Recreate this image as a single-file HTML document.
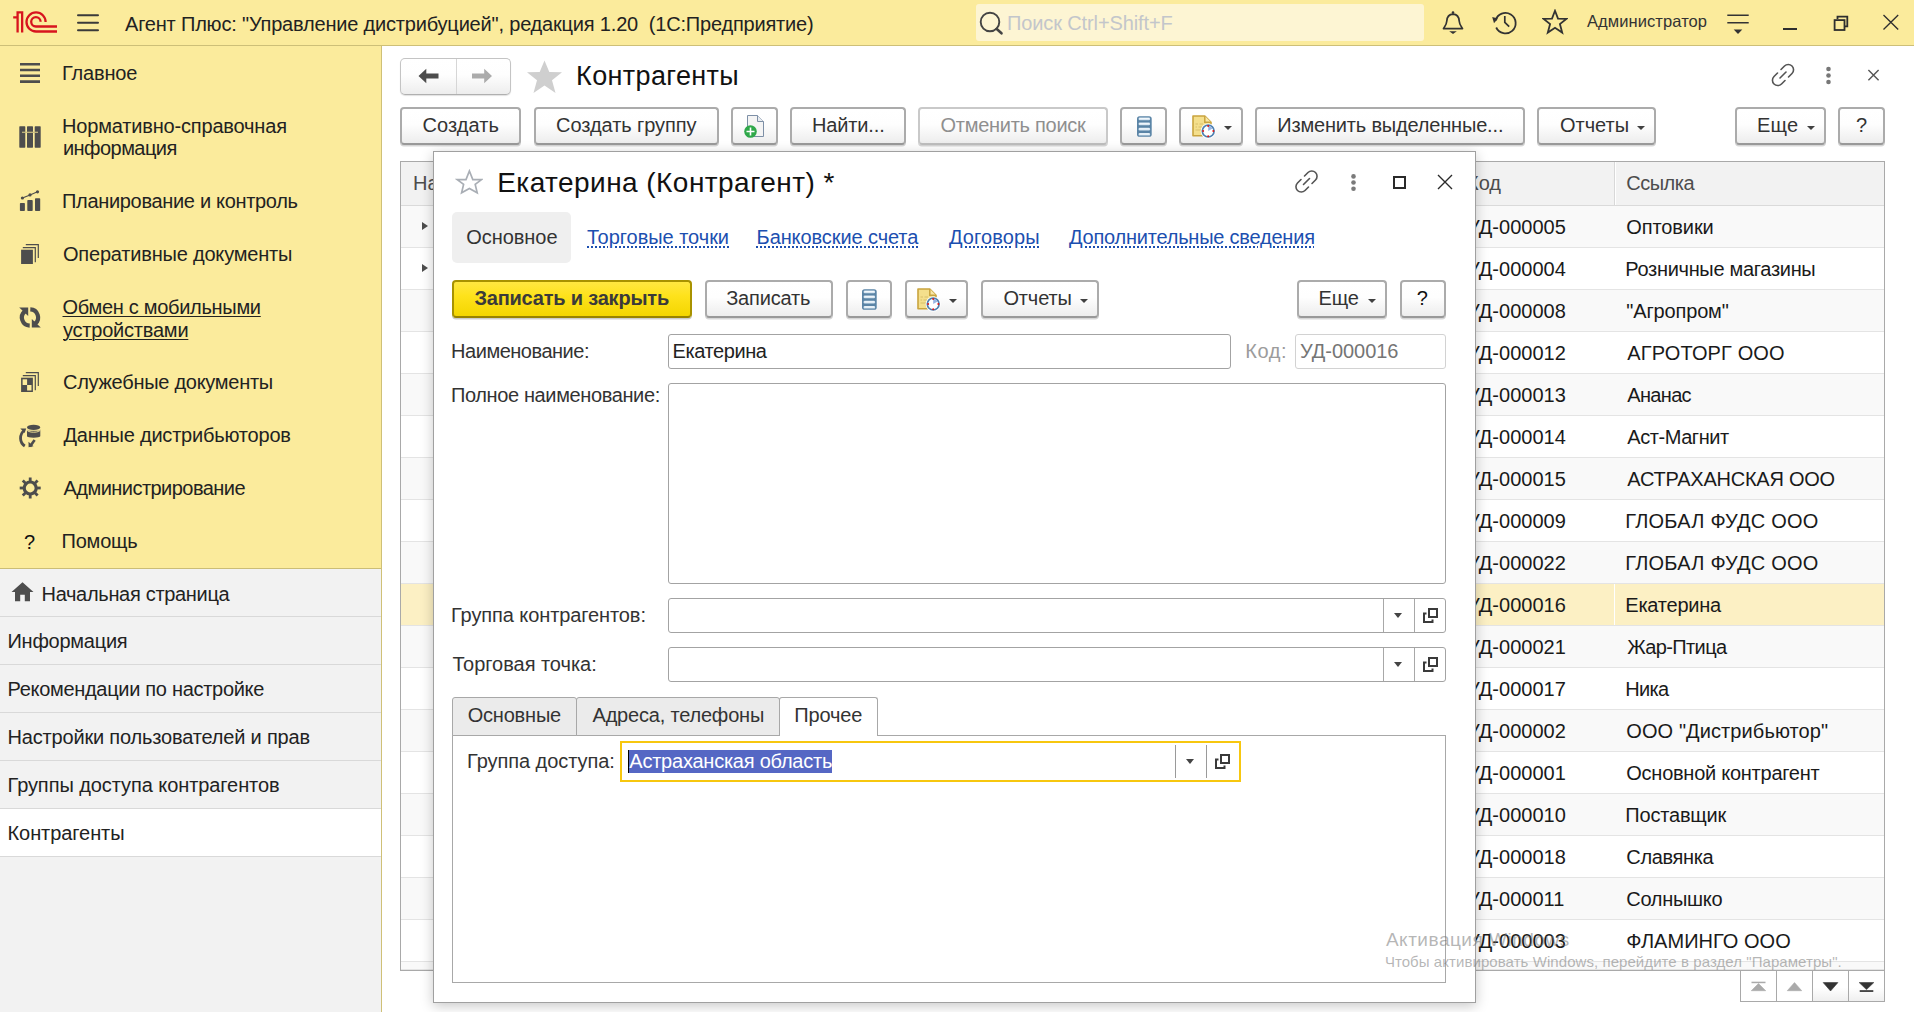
<!DOCTYPE html>
<html><head><meta charset="utf-8"><style>
*{box-sizing:border-box;margin:0;padding:0}
html,body{width:1914px;height:1012px;overflow:hidden;background:#fff}
body{font-family:"Liberation Sans",sans-serif;font-size:20px;color:#333;position:relative}
.a{position:absolute}
.t{position:absolute;white-space:nowrap;line-height:1}
.btn{position:absolute;border:2px solid #ababab;border-bottom-color:#999;border-radius:4px;background:linear-gradient(#ffffff 0%,#fefefe 45%,#ededed 100%);box-shadow:0 1.5px 0.5px rgba(0,0,0,0.16)}
.dd{position:absolute;width:0;height:0;border-left:4px solid transparent;border-right:4px solid transparent;border-top:4px solid #404040}
.inp{position:absolute;border:1px solid #a3a3a3;border-radius:3px;background:#fff}
.lnk{color:#1c4fb0;text-decoration:underline;text-decoration-style:dotted;text-underline-offset:4px;text-decoration-thickness:1px}
.sep{position:absolute;background:#a8a8a8;width:1px}
.tri{position:absolute;width:0;height:0;border-top:4.3px solid transparent;border-bottom:4.3px solid transparent;border-left:6px solid #4d4d4d}
</style></head><body>
<div class="a" style="left:0;top:0;width:1914px;height:45px;background:#fbeb9c"></div>
<div class="a" style="left:0;top:45px;width:1914px;height:1px;background:#cdbf78"></div>
<svg class="a" style="left:12px;top:10px" width="46" height="24" viewBox="0 0 46 24">
  <g fill="none" stroke="#d7141e" stroke-width="2.3">
    <path d="M1.2 7.4 H5.6 M5.6 22.6 V2.4 H10.15 V22.6"/>
    <path d="M33.6 11.95 A9.55 9.55 0 1 0 24.05 21.5 H45"/>
    <path d="M28.6 11.8 A4.7 4.7 0 1 0 23.9 16.5 H45"/>
  </g>
</svg>
<svg class="a" style="left:76px;top:13px" width="24" height="19" viewBox="0 0 24 19"><g stroke="#3a3a3a" stroke-width="2" stroke-linecap="round"><path d="M2 2.2H22M2 9.7H22M2 17.3H22"/></g></svg>
<div class="t" id="ttl" style="left:125.00px;top:14px;font-size:20px;color:#222;letter-spacing:-0.188px;">Агент Плюс: "Управление дистрибуцией", редакция 1.20&nbsp; (1С:Предприятие)</div>
<div class="a" style="left:976px;top:4px;width:448px;height:37px;background:#fdf5d3;border-radius:3px"></div>
<svg class="a" style="left:978px;top:10px" width="28" height="26" viewBox="0 0 28 26"><circle cx="12" cy="12" r="9.3" fill="none" stroke="#444" stroke-width="1.9"/><path d="M18.5 18.8 L23.5 23.3" stroke="#444" stroke-width="2.6" stroke-linecap="round"/></svg>
<div class="t" id="srch" style="left:1007.00px;top:13px;font-size:20px;color:#c3c6cb;letter-spacing:-0.118px;">Поиск Ctrl+Shift+F</div>
<svg class="a" style="left:1441px;top:10px" width="24" height="25" viewBox="0 0 24 25"><path d="M2.5 18.6 H21.5 C21 17.2 18.5 15.5 18.2 11 C18 7.5 17 4.5 12 4.2 C7 4.5 6 7.5 5.8 11 C5.5 15.5 3 17.2 2.5 18.6 Z" fill="none" stroke="#333" stroke-width="1.7" stroke-linejoin="round"/><circle cx="12" cy="2.6" r="1.3" fill="#333"/><path d="M8.2 21.2 H15.8 L12 24 Z" fill="#333"/></svg>
<svg class="a" style="left:1491px;top:10px" width="27" height="26" viewBox="0 0 27 26"><path d="M4.6 10.5 A10.2 10.2 0 1 1 5.2 17.5" fill="none" stroke="#333" stroke-width="1.8"/><path d="M1.2 7 L7 8.5 L3 13.2 Z" fill="#333"/><path d="M13.8 6 V12.3 L18.2 16.7" fill="none" stroke="#333" stroke-width="1.7"/></svg>
<svg class="a" style="left:1542px;top:9px" width="26" height="26" viewBox="0 0 26 26"><path d="M13 1.8 L16 9.6 L24.4 9.9 L17.9 15.1 L20.2 23.6 L13 18.8 L5.8 23.6 L8.1 15.1 L1.6 9.9 L10 9.6 Z" fill="none" stroke="#333" stroke-width="1.8" stroke-linejoin="miter"/></svg>
<div class="t" id="adm" style="left:1587.00px;top:13px;font-size:16.5px;color:#333;letter-spacing:0.083px;">Администратор</div>
<svg class="a" style="left:1726px;top:13px" width="24" height="22" viewBox="0 0 24 22"><path d="M1.3 2.3H22.7M1.3 9.8H22.7" stroke="#333" stroke-width="1.6"/><path d="M7.7 16.5 H16.3 L12 21 Z" fill="#333"/></svg>
<div class="a" style="left:1783px;top:28px;width:14px;height:2px;background:#2e2e2e"></div>
<svg class="a" style="left:1833px;top:15px" width="17" height="17" viewBox="0 0 17 17"><path d="M4.5 4 V1.7 H14.3 V11.4 H12" fill="none" stroke="#2e2e2e" stroke-width="1.8"/><rect x="1.6" y="5.1" width="9.9" height="9.9" fill="none" stroke="#2e2e2e" stroke-width="1.8"/></svg>
<svg class="a" style="left:1882px;top:14px" width="18" height="17" viewBox="0 0 18 17"><path d="M1.5 1 L16.2 15.6 M16.2 1 L1.5 15.6" stroke="#2e2e2e" stroke-width="1.35"/></svg>
<div class="a" style="left:0;top:46px;width:381px;height:522px;background:#fbeb9c"></div>
<div class="a" style="left:0;top:568px;width:381px;height:1px;background:#cbbd76"></div>
<div class="a" style="left:0;top:569px;width:381px;height:443px;background:#f2f2f2"></div>
<div class="a" style="left:381px;top:46px;width:1px;height:966px;background:#cfc077"></div>
<div class="t" id="s1" style="left:62.00px;top:63px;font-size:20px;color:#222;letter-spacing:-0.167px;">Главное</div>
<div class="t" id="s2a" style="left:62.00px;top:116px;font-size:20px;color:#222;letter-spacing:-0.175px;">Нормативно-справочная</div>
<div class="t" id="s2b" style="left:63.00px;top:138px;font-size:20px;color:#222;letter-spacing:-0.556px;">информация</div>
<div class="t" id="s3" style="left:62.00px;top:191px;font-size:20px;color:#222;letter-spacing:-0.318px;">Планирование и контроль</div>
<div class="t" id="s4" style="left:63.00px;top:244px;font-size:20px;color:#222;letter-spacing:-0.200px;">Оперативные документы</div>
<div class="t" id="s5a" style="left:62.50px;top:297px;font-size:20px;color:#222;letter-spacing:-0.294px;text-decoration:underline;text-underline-offset:2px;text-decoration-thickness:1px">Обмен с мобильными</div>
<div class="t" id="s5b" style="left:63.00px;top:320px;font-size:20px;color:#222;letter-spacing:-0.218px;text-decoration:underline;text-underline-offset:2px;text-decoration-thickness:1px">устройствами</div>
<div class="t" id="s6" style="left:63.00px;top:372px;font-size:20px;color:#222;letter-spacing:-0.278px;">Служебные документы</div>
<div class="t" id="s7" style="left:63.50px;top:425px;font-size:20px;color:#222;letter-spacing:-0.200px;">Данные дистрибьюторов</div>
<div class="t" id="s8" style="left:63.50px;top:478px;font-size:20px;color:#222;letter-spacing:-0.537px;">Администрирование</div>
<div class="t" id="s9" style="left:61.50px;top:531px;font-size:20px;color:#222;letter-spacing:-0.200px;">Помощь</div>
<svg class="a" style="left:19px;top:62px" width="22" height="22" viewBox="0 0 22 22"><g stroke="#4d4d4d" stroke-width="2.6"><path d="M1 2.2H21M1 8H21M1 13.8H21M1 19.6H21"/></g></svg>
<svg class="a" style="left:19px;top:126px" width="22" height="22" viewBox="0 0 22 22"><g fill="#4d4d4d"><rect x="0.3" y="0.3" width="6" height="21.4" rx="0.6"/><rect x="8" y="0.3" width="6" height="21.4" rx="0.6"/><rect x="15.7" y="0.3" width="6" height="21.4" rx="0.6"/></g><path d="M3 6.3H19" stroke="#c9bd80" stroke-width="1.2"/></svg>
<svg class="a" style="left:19px;top:190px" width="22" height="22" viewBox="0 0 22 22"><g fill="#4d4d4d"><rect x="0.9" y="13" width="5" height="8" rx="0.8"/><rect x="8.3" y="10" width="5.4" height="11" rx="0.8"/><rect x="16" y="8.3" width="5.2" height="12.7" rx="0.8"/><circle cx="3.4" cy="8" r="1.6"/><circle cx="11" cy="4.9" r="1.6"/><circle cx="18.5" cy="1.8" r="1.6"/></g><path d="M3.4 8 L11 4.9 L18.5 1.8" stroke="#4d4d4d" stroke-width="1.1" fill="none"/></svg>
<svg class="a" style="left:20px;top:243px" width="20" height="22" viewBox="0 0 20 22"><rect x="1.1" y="6.7" width="11.8" height="14.3" fill="#4d4d4d"/><path d="M2.8 4.7 H15.3 V19.3 M5.8 1.7 H18.3 V15.1" stroke="#4d4d4d" stroke-width="1.2" fill="none"/></svg>
<svg class="a" style="left:18px;top:305px" width="25" height="25" viewBox="0 0 25 25"><g fill="none" stroke="#4d4d4d" stroke-width="4.2"><path d="M11.7 20.6 A8.1 8.1 0 0 1 6.8 6.3"/><path d="M12.3 4.4 A8.1 8.1 0 0 1 17.2 18.7"/></g><g fill="#4d4d4d"><path d="M1.2 2.4 L10.2 2.4 L10.2 11 Z"/><path d="M22.8 22.6 L13.8 22.6 L13.8 14 Z"/></g></svg>
<svg class="a" style="left:20px;top:371px" width="20" height="22" viewBox="0 0 20 22"><rect x="1.1" y="6.7" width="11.8" height="14.3" fill="#4d4d4d"/><path d="M2.8 4.7 H15.3 V19.3 M5.8 1.7 H18.3 V15.1" stroke="#4d4d4d" stroke-width="1.2" fill="none"/><rect x="2.6" y="8.3" width="4.5" height="5.7" fill="#fbeb9c"/><rect x="7.1" y="14" width="4.4" height="5.5" fill="#fbeb9c"/></svg>
<svg class="a" style="left:18px;top:424px" width="24" height="24" viewBox="0 0 24 24"><g fill="#4d4d4d"><ellipse cx="15.6" cy="3.4" rx="6.6" ry="2.6"/><rect x="9" y="6.8" width="13.3" height="5.4"/><ellipse cx="15.6" cy="12.2" rx="6.6" ry="1.5"/><path d="M9 5.6 A6.6 2.2 0 0 0 22.3 5.6 V7 H9 Z"/></g><path d="M9 5.9 A6.6 2.3 0 0 0 22.3 5.9" stroke="#fbeb9c" stroke-width="0.9" fill="none"/><path d="M6.3 6.5 A9.5 9.5 0 0 0 6.8 22" stroke="#4d4d4d" stroke-width="2.8" fill="none"/><path d="M2.3 4.6 H8.2 L6.6 9 Z" fill="#4d4d4d"/><path d="M12 22.5 L16.6 16" stroke="#4d4d4d" stroke-width="2.6"/><path d="M10.5 17.8 L10.6 23.2 L15.5 22.2 Z" fill="#4d4d4d"/></svg>
<svg class="a" style="left:19px;top:477px" width="22" height="22" viewBox="0 0 22 22"><g transform="translate(11.2 11)" fill="#4d4d4d"><circle r="7.6"/><rect x="-1.4" y="-10.5" width="2.8" height="5" transform="rotate(0)"/><rect x="-1.4" y="-10.5" width="2.8" height="5" transform="rotate(45)"/><rect x="-1.4" y="-10.5" width="2.8" height="5" transform="rotate(90)"/><rect x="-1.4" y="-10.5" width="2.8" height="5" transform="rotate(135)"/><rect x="-1.4" y="-10.5" width="2.8" height="5" transform="rotate(180)"/><rect x="-1.4" y="-10.5" width="2.8" height="5" transform="rotate(225)"/><rect x="-1.4" y="-10.5" width="2.8" height="5" transform="rotate(270)"/><rect x="-1.4" y="-10.5" width="2.8" height="5" transform="rotate(315)"/><circle r="4.4" fill="#fbeb9c"/></g></svg>
<div class="t" id="s9q" style="left:24.00px;top:532px;font-size:20px;color:#111;">?</div>
<div class="a" style="left:0;top:616px;width:381px;height:1px;background:#d9d9d9"></div>
<div class="a" style="left:0;top:664px;width:381px;height:1px;background:#d9d9d9"></div>
<div class="a" style="left:0;top:712px;width:381px;height:1px;background:#d9d9d9"></div>
<div class="a" style="left:0;top:760px;width:381px;height:1px;background:#d9d9d9"></div>
<div class="a" style="left:0;top:808px;width:381px;height:1px;background:#d9d9d9"></div>
<div class="a" style="left:0;top:856px;width:381px;height:1px;background:#d9d9d9"></div>
<div class="a" style="left:0;top:809px;width:381px;height:47px;background:#fff"></div>
<svg class="a" style="left:11px;top:582px" width="23" height="20" viewBox="0 0 23 20"><path d="M11.5 0.3 L22.5 10 H19 V19.3 H13.8 V12.8 H9.2 V19.3 H4 V10 H0.5 Z" fill="#4d4d4d"/></svg>
<div class="t" id="o1" style="left:41.50px;top:584px;font-size:20px;color:#222;letter-spacing:-0.312px;">Начальная страница</div>
<div class="t" id="o2" style="left:7.50px;top:631px;font-size:20px;color:#222;letter-spacing:-0.255px;">Информация</div>
<div class="t" id="o3" style="left:7.50px;top:679px;font-size:20px;color:#222;letter-spacing:-0.301px;">Рекомендации по настройке</div>
<div class="t" id="o4" style="left:7.50px;top:727px;font-size:20px;color:#222;letter-spacing:-0.176px;">Настройки пользователей и прав</div>
<div class="t" id="o5" style="left:7.50px;top:775px;font-size:20px;color:#222;letter-spacing:-0.077px;">Группы доступа контрагентов</div>
<div class="t" id="o6" style="left:7.50px;top:823px;font-size:20px;color:#222;letter-spacing:-0.070px;">Контрагенты</div>
<div class="btn" style="left:400px;top:58px;width:111px;height:37px;border-width:1px;border-color:#c4c4c4;border-bottom-color:#b0b0b0;border-radius:5px;box-shadow:0 1px 1px rgba(0,0,0,0.12)"></div>
<div class="a" style="left:456px;top:59px;width:1px;height:35px;background:#d6d6d6"></div>
<svg class="a" style="left:418px;top:68px" width="22" height="16" viewBox="0 0 22 16"><path d="M0.5 8 L8.3 0.8 V5.6 H20.5 V10.4 H8.3 V15.2 Z" fill="#4d4d4d"/></svg>
<svg class="a" style="left:471px;top:68px" width="22" height="16" viewBox="0 0 22 16"><path d="M21 8 L13.2 0.8 V5.6 H1 V10.4 H13.2 V15.2 Z" fill="#ababab"/></svg>
<svg class="a" style="left:526px;top:60px" width="37" height="34" viewBox="0 0 37 34"><path d="M18.5 0.5 L23.3 12 L36 12.3 L26 20.3 L29.5 33 L18.5 25.5 L7.5 33 L11 20.3 L1 12.3 L13.7 12 Z" fill="#cfcfcf"/></svg>
<div class="t" id="mt" style="left:576.10px;top:63px;font-size:27px;color:#111;letter-spacing:0.360px;">Контрагенты</div>
<svg class="a" style="left:1771px;top:63px" width="24" height="24" viewBox="0 0 24 24"><g fill="none" stroke="#555" stroke-width="1.6" stroke-linecap="round"><path d="M10 6.5 L13.5 3 A4 4 0 0 1 21 10.5 L17.5 14"/><path d="M14 17.5 L10.5 21 A4 4 0 0 1 3 13.5 L6.5 10"/><path d="M9 15 L15 9"/></g></svg>
<svg class="a" style="left:1824px;top:66px" width="9" height="20" viewBox="0 0 9 20"><g fill="#777"><circle cx="4.5" cy="3" r="2.3"/><circle cx="4.5" cy="9.5" r="2.3"/><circle cx="4.5" cy="16" r="2.3"/></g></svg>
<svg class="a" style="left:1867px;top:69px" width="13" height="12" viewBox="0 0 13 12"><path d="M1.4 1 L11.6 11.2 M11.6 1 L1.4 11.2" stroke="#555" stroke-width="1.4"/></svg>
<div class="btn" style="left:400px;top:107px;width:121px;height:38px;"></div>
<div class="t" id="b1" style="left:422.40px;top:115px;font-size:20px;color:#333;letter-spacing:0.100px;">Создать</div>
<div class="btn" style="left:534px;top:107px;width:185px;height:38px;"></div>
<div class="t" id="b2" style="left:556.10px;top:115px;font-size:20px;color:#333;letter-spacing:-0.077px;">Создать группу</div>
<div class="btn" style="left:731px;top:107px;width:47px;height:38px;"></div>
<svg class="a" style="left:742px;top:114px" width="24" height="25" viewBox="0 0 24 25"><path d="M5.5 1.5 H15.5 L21.5 7.5 V22.5 H5.5 Z" fill="#f4f4f4" stroke="#7d8fa6" stroke-width="1"/><path d="M15.5 1.5 V7.5 H21.5" fill="#e8ecf0" stroke="#7d8fa6" stroke-width="1"/><circle cx="8.5" cy="17.5" r="6.3" fill="#2fa84a"/><path d="M8.5 13.5 V21.5 M4.5 17.5 H12.5" stroke="#fff" stroke-width="1.6"/></svg>
<div class="btn" style="left:790px;top:107px;width:116px;height:38px;"></div>
<div class="t" id="b3" style="left:811.90px;top:115px;font-size:20px;color:#333;letter-spacing:-0.129px;">Найти...</div>
<div class="btn" style="left:918px;top:107px;width:190px;height:38px;border-color:#c9c9c9;border-bottom-color:#bdbdbd"></div>
<div class="t" id="b4" style="left:940.50px;top:115px;font-size:20px;color:#8f8f8f;letter-spacing:-0.269px;">Отменить поиск</div>
<div class="btn" style="left:1120px;top:107px;width:47px;height:38px;"></div>
<svg class="a" style="left:1136px;top:115px" width="17" height="23" viewBox="0 0 17 23"><rect x="1" y="1.2" width="14.7" height="20.6" rx="2.6" fill="#5a84a6"/><g fill="#d3e3f0"><rect x="2.6" y="2.5" width="11.5" height="2.7" rx="1.2"/><rect x="2.6" y="7.6" width="11.5" height="2.7" rx="1.2"/><rect x="2.6" y="12.8" width="11.5" height="2.7" rx="1.2"/><rect x="2.6" y="17.9" width="11.5" height="2.7" rx="1.2"/></g><g fill="#f2f8fc"><rect x="3.5" y="3" width="9.7" height="1.2"/><rect x="3.5" y="8.1" width="9.7" height="1.2"/><rect x="3.5" y="13.3" width="9.7" height="1.2"/><rect x="3.5" y="18.4" width="9.7" height="1.2"/></g></svg>
<div class="btn" style="left:1179px;top:107px;width:64px;height:38px;"></div>
<svg class="a" style="left:1190px;top:114px" width="26" height="25" viewBox="0 0 26 25"><path d="M3 2 H14.8 L21 8.2 V21.8 H3 Z" fill="#f4df8c" stroke="#c9a43e" stroke-width="1.6" stroke-linejoin="round"/><path d="M14.8 2 V8.2 H21" fill="#f8e8a8" stroke="#c9a43e" stroke-width="1.5"/><g stroke="#d8bf6a" stroke-width="1.2"><path d="M5.5 10H8M9.5 10H13M5.5 13H7M8.5 13H12M5.5 16H11"/></g><circle cx="18.2" cy="17.1" r="7.6" fill="#fff"/><circle cx="18.2" cy="17.1" r="5.9" fill="#fff" stroke="#4f80b0" stroke-width="1.7"/><path d="M18.2 17.1 V11.8 A5.3 5.3 0 0 1 22.5 14.5 Z" fill="#98b5e3"/><g fill="#e01818"><circle cx="18.2" cy="12" r="1"/><circle cx="18.2" cy="22.2" r="1"/><circle cx="13.1" cy="17.1" r="1"/><circle cx="23.3" cy="17.1" r="1"/></g></svg>
<div class="dd" style="left:1224.0px;top:126px;border-top-color:#404040"></div>
<div class="btn" style="left:1255px;top:107px;width:270px;height:38px;"></div>
<div class="t" id="b5" style="left:1277.20px;top:115px;font-size:20px;color:#333;letter-spacing:-0.176px;">Изменить выделенные...</div>
<div class="btn" style="left:1537px;top:107px;width:119px;height:38px;"></div>
<div class="t" id="b6" style="left:1560.00px;top:115px;font-size:20px;color:#333;letter-spacing:-0.020px;">Отчеты</div>
<div class="dd" style="left:1637.3px;top:126px;border-top-color:#404040"></div>
<div class="btn" style="left:1735px;top:107px;width:91px;height:38px;"></div>
<div class="t" id="b7" style="left:1757.00px;top:115px;font-size:20px;color:#333;letter-spacing:0.250px;">Еще</div>
<div class="dd" style="left:1807.2px;top:126px;border-top-color:#404040"></div>
<div class="btn" style="left:1838px;top:107px;width:47px;height:38px;"></div>
<div class="t" id="b8" style="left:1856.00px;top:115px;font-size:20px;color:#333;">?</div>
<div class="a" style="left:400px;top:161px;width:1485px;height:810px;border:1px solid #a9a9a9;background:#fff"></div>
<div class="a" style="left:401px;top:162px;width:1483px;height:44px;background:#f2f2f2;border-bottom:1px solid #dadada"></div>
<div class="a" style="left:1614px;top:162px;width:1px;height:43px;background:#d8d8d8"></div>
<div class="a" style="left:1615px;top:162px;width:1px;height:43px;background:#fff"></div>
<div class="t" id="h1" style="left:413.00px;top:173px;font-size:20px;color:#4d4d4d;">Наименование</div>
<div class="t" id="h2" style="left:1467.00px;top:173px;font-size:20px;color:#4d4d4d;">Код</div>
<div class="t" id="h3" style="left:1626.20px;top:173px;font-size:20px;color:#4d4d4d;letter-spacing:-0.480px;">Ссылка</div>
<div class="a" style="left:401px;top:206px;width:1483px;height:42px;background:#f9f9f9;border-bottom:1px solid #e4e4e4"></div>
<div class="tri" style="left:422px;top:222px"></div>
<div class="t" id="rk0" style="left:1467.00px;top:217px;font-size:20px;color:#1a1a1a;">УД-000005</div>
<div class="t" id="rn0" style="left:1626.30px;top:217px;font-size:20px;color:#1a1a1a;letter-spacing:-0.100px;">Оптовики</div>
<div class="a" style="left:401px;top:248px;width:1483px;height:42px;background:#ffffff;border-bottom:1px solid #e4e4e4"></div>
<div class="tri" style="left:422px;top:264px"></div>
<div class="t" id="rk1" style="left:1467.00px;top:259px;font-size:20px;color:#1a1a1a;">УД-000004</div>
<div class="t" id="rn1" style="left:1625.30px;top:259px;font-size:20px;color:#1a1a1a;letter-spacing:-0.306px;">Розничные магазины</div>
<div class="a" style="left:401px;top:290px;width:1483px;height:42px;background:#f9f9f9;border-bottom:1px solid #e4e4e4"></div>
<div class="t" id="rk2" style="left:1467.00px;top:301px;font-size:20px;color:#1a1a1a;">УД-000008</div>
<div class="t" id="rn2" style="left:1626.30px;top:301px;font-size:20px;color:#1a1a1a;letter-spacing:-0.156px;">"Агропром"</div>
<div class="a" style="left:401px;top:332px;width:1483px;height:42px;background:#ffffff;border-bottom:1px solid #e4e4e4"></div>
<div class="t" id="rk3" style="left:1467.00px;top:343px;font-size:20px;color:#1a1a1a;">УД-000012</div>
<div class="t" id="rn3" style="left:1627.30px;top:343px;font-size:20px;color:#1a1a1a;letter-spacing:0.127px;">АГРОТОРГ ООО</div>
<div class="a" style="left:401px;top:374px;width:1483px;height:42px;background:#f9f9f9;border-bottom:1px solid #e4e4e4"></div>
<div class="t" id="rk4" style="left:1467.00px;top:385px;font-size:20px;color:#1a1a1a;">УД-000013</div>
<div class="t" id="rn4" style="left:1627.30px;top:385px;font-size:20px;color:#1a1a1a;letter-spacing:-0.680px;">Ананас</div>
<div class="a" style="left:401px;top:416px;width:1483px;height:42px;background:#ffffff;border-bottom:1px solid #e4e4e4"></div>
<div class="t" id="rk5" style="left:1467.00px;top:427px;font-size:20px;color:#1a1a1a;">УД-000014</div>
<div class="t" id="rn5" style="left:1627.30px;top:427px;font-size:20px;color:#1a1a1a;letter-spacing:-0.433px;">Аст-Магнит</div>
<div class="a" style="left:401px;top:458px;width:1483px;height:42px;background:#f9f9f9;border-bottom:1px solid #e4e4e4"></div>
<div class="t" id="rk6" style="left:1467.00px;top:469px;font-size:20px;color:#1a1a1a;">УД-000015</div>
<div class="t" id="rn6" style="left:1627.30px;top:469px;font-size:20px;color:#1a1a1a;letter-spacing:-0.240px;">АСТРАХАНСКАЯ ООО</div>
<div class="a" style="left:401px;top:500px;width:1483px;height:42px;background:#ffffff;border-bottom:1px solid #e4e4e4"></div>
<div class="t" id="rk7" style="left:1467.00px;top:511px;font-size:20px;color:#1a1a1a;">УД-000009</div>
<div class="t" id="rn7" style="left:1625.30px;top:511px;font-size:20px;color:#1a1a1a;letter-spacing:0.229px;">ГЛОБАЛ ФУДС ООО</div>
<div class="a" style="left:401px;top:542px;width:1483px;height:42px;background:#f9f9f9;border-bottom:1px solid #e4e4e4"></div>
<div class="t" id="rk8" style="left:1467.00px;top:553px;font-size:20px;color:#1a1a1a;">УД-000022</div>
<div class="t" id="rn8" style="left:1625.30px;top:553px;font-size:20px;color:#1a1a1a;letter-spacing:0.229px;">ГЛОБАЛ ФУДС ООО</div>
<div class="a" style="left:401px;top:584px;width:1483px;height:42px;background:#fcf0c4;border-bottom:1px solid #e4e4e4"></div>
<div class="a" style="left:1614px;top:584px;width:1px;height:41px;background:#fff"></div>
<div class="t" id="rk9" style="left:1467.00px;top:595px;font-size:20px;color:#1a1a1a;">УД-000016</div>
<div class="t" id="rn9" style="left:1625.30px;top:595px;font-size:20px;color:#1a1a1a;letter-spacing:-0.237px;">Екатерина</div>
<div class="a" style="left:401px;top:626px;width:1483px;height:42px;background:#f9f9f9;border-bottom:1px solid #e4e4e4"></div>
<div class="t" id="rk10" style="left:1467.00px;top:637px;font-size:20px;color:#1a1a1a;">УД-000021</div>
<div class="t" id="rn10" style="left:1627.30px;top:637px;font-size:20px;color:#1a1a1a;letter-spacing:-0.637px;">Жар-Птица</div>
<div class="a" style="left:401px;top:668px;width:1483px;height:42px;background:#ffffff;border-bottom:1px solid #e4e4e4"></div>
<div class="t" id="rk11" style="left:1467.00px;top:679px;font-size:20px;color:#1a1a1a;">УД-000017</div>
<div class="t" id="rn11" style="left:1625.30px;top:679px;font-size:20px;color:#1a1a1a;letter-spacing:-0.700px;">Ника</div>
<div class="a" style="left:401px;top:710px;width:1483px;height:42px;background:#f9f9f9;border-bottom:1px solid #e4e4e4"></div>
<div class="t" id="rk12" style="left:1467.00px;top:721px;font-size:20px;color:#1a1a1a;">УД-000002</div>
<div class="t" id="rn12" style="left:1626.30px;top:721px;font-size:20px;color:#1a1a1a;letter-spacing:0.094px;">ООО "Дистрибьютор"</div>
<div class="a" style="left:401px;top:752px;width:1483px;height:42px;background:#ffffff;border-bottom:1px solid #e4e4e4"></div>
<div class="t" id="rk13" style="left:1467.00px;top:763px;font-size:20px;color:#1a1a1a;">УД-000001</div>
<div class="t" id="rn13" style="left:1626.30px;top:763px;font-size:20px;color:#1a1a1a;letter-spacing:-0.256px;">Основной контрагент</div>
<div class="a" style="left:401px;top:794px;width:1483px;height:42px;background:#f9f9f9;border-bottom:1px solid #e4e4e4"></div>
<div class="t" id="rk14" style="left:1467.00px;top:805px;font-size:20px;color:#1a1a1a;">УД-000010</div>
<div class="t" id="rn14" style="left:1625.30px;top:805px;font-size:20px;color:#1a1a1a;letter-spacing:-0.188px;">Поставщик</div>
<div class="a" style="left:401px;top:836px;width:1483px;height:42px;background:#ffffff;border-bottom:1px solid #e4e4e4"></div>
<div class="t" id="rk15" style="left:1467.00px;top:847px;font-size:20px;color:#1a1a1a;">УД-000018</div>
<div class="t" id="rn15" style="left:1626.30px;top:847px;font-size:20px;color:#1a1a1a;letter-spacing:-0.357px;">Славянка</div>
<div class="a" style="left:401px;top:878px;width:1483px;height:42px;background:#f9f9f9;border-bottom:1px solid #e4e4e4"></div>
<div class="t" id="rk16" style="left:1467.00px;top:889px;font-size:20px;color:#1a1a1a;">УД-000011</div>
<div class="t" id="rn16" style="left:1626.30px;top:889px;font-size:20px;color:#1a1a1a;letter-spacing:-0.286px;">Солнышко</div>
<div class="a" style="left:401px;top:920px;width:1483px;height:42px;background:#ffffff;border-bottom:1px solid #e4e4e4"></div>
<div class="t" id="rk17" style="left:1467.00px;top:931px;font-size:20px;color:#1a1a1a;">УД-000003</div>
<div class="t" id="rn17" style="left:1626.30px;top:931px;font-size:20px;color:#1a1a1a;letter-spacing:0.045px;">ФЛАМИНГО ООО</div>
<div class="a" style="left:401px;top:962px;width:1483px;height:8px;background:#f9f9f9;border-bottom:1px solid #e4e4e4"></div>
<div class="a" style="left:1740px;top:970px;width:145px;height:32px;border:1px solid #a9a9a9;background:#fff"></div>
<div class="a" style="left:1776px;top:970px;width:1px;height:32px;background:#a9a9a9"></div>
<div class="a" style="left:1812px;top:970px;width:1px;height:32px;background:#a9a9a9"></div>
<div class="a" style="left:1848px;top:970px;width:1px;height:32px;background:#a9a9a9"></div>
<div class="a" style="left:1813px;top:971px;width:35px;height:30px;background:linear-gradient(#fff 55%,#efefef)"></div>
<div class="a" style="left:1849px;top:971px;width:35px;height:30px;background:linear-gradient(#fff 55%,#efefef)"></div>
<svg class="a" style="left:1750px;top:980px" width="18" height="13" viewBox="0 0 18 13"><rect x="1.5" y="1.7" width="14" height="1.5" fill="#aaa"/><path d="M1.3 10.7 L8.5 3.6 L15.7 10.7 Z" fill="#aaa" stroke="#aaa" stroke-width="0.6" stroke-linejoin="round"/></svg>
<svg class="a" style="left:1786px;top:980px" width="18" height="13" viewBox="0 0 18 13"><path d="M1.3 10.7 L8.5 2.6 L15.7 10.7 Z" fill="#aaa" stroke="#aaa" stroke-width="0.6" stroke-linejoin="round"/></svg>
<svg class="a" style="left:1822px;top:980px" width="18" height="13" viewBox="0 0 18 13"><path d="M1.2 2.6 L15.9 2.6 L8.55 11 Z" fill="#333" stroke="#333" stroke-width="0.6" stroke-linejoin="round"/></svg>
<svg class="a" style="left:1858px;top:980px" width="18" height="13" viewBox="0 0 18 13"><path d="M1.2 2.6 L15.8 2.6 L8.5 9.6 Z" fill="#333" stroke="#333" stroke-width="0.6" stroke-linejoin="round"/><rect x="1.7" y="10.2" width="13.6" height="1.7" fill="#333"/></svg>
<div class="a" style="left:433px;top:151px;width:1043px;height:852px;background:#fff;border:1px solid #a0a0a0;box-shadow:0 3px 12px rgba(0,0,0,0.22)"></div>
<svg class="a" style="left:455px;top:169px" width="28" height="27" viewBox="0 0 28 27"><path d="M14.4 2 L17.8 10.6 L26.6 10.6 L20.2 15.4 L22.2 23.8 L14.4 19.4 L6.6 23.8 L8.6 15.4 L2.2 10.6 L11 10.6 Z" fill="none" stroke="#a9aeb5" stroke-width="1.7" stroke-linejoin="miter"/></svg>
<div class="t" id="mdt" style="left:497.20px;top:169px;font-size:28px;color:#111;letter-spacing:0.453px;">Екатерина (Контрагент) *</div>
<svg class="a" style="left:1294px;top:169px" width="25" height="25" viewBox="0 0 25 25"><g fill="none" stroke="#555" stroke-width="1.6" stroke-linecap="round"><path d="M10.5 7 L14 3.5 A4.2 4.2 0 0 1 21.5 11 L18 14.5"/><path d="M14.5 18 L11 21.5 A4.2 4.2 0 0 1 3.5 14 L7 10.5"/><path d="M9.5 15.5 L15.5 9.5"/></g></svg>
<svg class="a" style="left:1349px;top:173px" width="9" height="19" viewBox="0 0 9 19"><g fill="#7a7a7a"><circle cx="4.5" cy="3.4" r="2.3"/><circle cx="4.5" cy="9.5" r="2.3"/><circle cx="4.5" cy="15.7" r="2.3"/></g></svg>
<div class="a" style="left:1393px;top:176px;width:13px;height:13px;border:2px solid #2a2a2a"></div>
<svg class="a" style="left:1437px;top:174px" width="16" height="16" viewBox="0 0 16 16"><path d="M1 1 L15 15 M15 1 L1 15" stroke="#2a2a2a" stroke-width="1.4"/></svg>
<div class="a" style="left:452px;top:212px;width:119px;height:51px;background:#efefef;border-radius:5px"></div>
<div class="t" id="tb0" style="left:466.20px;top:227px;font-size:20px;color:#333;letter-spacing:-0.042px;">Основное</div>
<div class="t" id="tb1" style="left:587.00px;top:227px;font-size:20px;color:#1c4fb0;letter-spacing:-0.038px;text-decoration:underline dotted;text-underline-offset:2px">Торговые точки</div>
<div class="t" id="tb2" style="left:756.60px;top:227px;font-size:20px;color:#1c4fb0;letter-spacing:-0.093px;text-decoration:underline dotted;text-underline-offset:2px">Банковские счета</div>
<div class="t" id="tb3" style="left:949.00px;top:227px;font-size:20px;color:#1c4fb0;letter-spacing:0.087px;text-decoration:underline dotted;text-underline-offset:2px">Договоры</div>
<div class="t" id="tb4" style="left:1069.00px;top:227px;font-size:20px;color:#1c4fb0;letter-spacing:-0.219px;text-decoration:underline dotted;text-underline-offset:2px">Дополнительные сведения</div>
<div class="btn" style="left:452px;top:280px;width:240px;height:38px;border-color:#a89200;border-bottom-color:#988300;background:linear-gradient(#ffe741 0%,#fee21c 40%,#f4d600 100%);box-shadow:0 1.5px 0.5px rgba(0,0,0,0.2)"></div>
<div class="t" id="mb1" style="left:474.40px;top:288px;font-size:20px;color:#3a3a3a;letter-spacing:-0.200px;font-weight:bold">Записать и закрыть</div>
<div class="btn" style="left:705px;top:280px;width:128px;height:38px;"></div>
<div class="t" id="mb2" style="left:726.20px;top:288px;font-size:20px;color:#333;letter-spacing:-0.185px;">Записать</div>
<div class="btn" style="left:846px;top:280px;width:46px;height:38px;"></div>
<svg class="a" style="left:861px;top:288px" width="17" height="23" viewBox="0 0 17 23"><rect x="1" y="1.2" width="14.7" height="20.6" rx="2.6" fill="#5a84a6"/><g fill="#d3e3f0"><rect x="2.6" y="2.5" width="11.5" height="2.7" rx="1.2"/><rect x="2.6" y="7.6" width="11.5" height="2.7" rx="1.2"/><rect x="2.6" y="12.8" width="11.5" height="2.7" rx="1.2"/><rect x="2.6" y="17.9" width="11.5" height="2.7" rx="1.2"/></g><g fill="#f2f8fc"><rect x="3.5" y="3" width="9.7" height="1.2"/><rect x="3.5" y="8.1" width="9.7" height="1.2"/><rect x="3.5" y="13.3" width="9.7" height="1.2"/><rect x="3.5" y="18.4" width="9.7" height="1.2"/></g></svg>
<div class="btn" style="left:905px;top:280px;width:63px;height:38px;"></div>
<svg class="a" style="left:915px;top:287px" width="26" height="25" viewBox="0 0 26 25"><path d="M3 2 H14.8 L21 8.2 V21.8 H3 Z" fill="#f4df8c" stroke="#c9a43e" stroke-width="1.6" stroke-linejoin="round"/><path d="M14.8 2 V8.2 H21" fill="#f8e8a8" stroke="#c9a43e" stroke-width="1.5"/><g stroke="#d8bf6a" stroke-width="1.2"><path d="M5.5 10H8M9.5 10H13M5.5 13H7M8.5 13H12M5.5 16H11"/></g><circle cx="18.2" cy="17.1" r="7.6" fill="#fff"/><circle cx="18.2" cy="17.1" r="5.9" fill="#fff" stroke="#4f80b0" stroke-width="1.7"/><path d="M18.2 17.1 V11.8 A5.3 5.3 0 0 1 22.5 14.5 Z" fill="#98b5e3"/><g fill="#e01818"><circle cx="18.2" cy="12" r="1"/><circle cx="18.2" cy="22.2" r="1"/><circle cx="13.1" cy="17.1" r="1"/><circle cx="23.3" cy="17.1" r="1"/></g></svg>
<div class="dd" style="left:949.0px;top:299px;border-top-color:#404040"></div>
<div class="btn" style="left:981px;top:280px;width:118px;height:38px;"></div>
<div class="t" id="mb3" style="left:1003.40px;top:288px;font-size:20px;color:#333;letter-spacing:-0.120px;">Отчеты</div>
<div class="dd" style="left:1080.0px;top:299px;border-top-color:#404040"></div>
<div class="btn" style="left:1297px;top:280px;width:90px;height:38px;"></div>
<div class="t" id="mb4" style="left:1318.60px;top:288px;font-size:20px;color:#333;letter-spacing:-0.200px;">Еще</div>
<div class="dd" style="left:1368.0px;top:299px;border-top-color:#404040"></div>
<div class="btn" style="left:1400px;top:280px;width:46px;height:38px;"></div>
<div class="t" id="mb5" style="left:1416.70px;top:288px;font-size:20px;color:#111;">?</div>
<div class="t" id="l1" style="left:451.10px;top:341px;font-size:20px;color:#333;letter-spacing:-0.484px;">Наименование:</div>
<div class="inp" style="left:668px;top:334px;width:563px;height:35px"></div>
<div class="t" id="v1" style="left:672.60px;top:341px;font-size:20px;color:#222;letter-spacing:-0.425px;">Екатерина</div>
<div class="t" id="l2" style="left:1245.30px;top:341px;font-size:20px;color:#9c9c9c;letter-spacing:0.567px;">Код:</div>
<div class="inp" style="left:1295px;top:334px;width:151px;height:35px;border-color:#d2d2d2"></div>
<div class="t" id="v2" style="left:1300.10px;top:341px;font-size:20px;color:#757575;letter-spacing:-0.050px;">УД-000016</div>
<div class="t" id="l3" style="left:451.00px;top:385px;font-size:20px;color:#333;letter-spacing:-0.378px;">Полное наименование:</div>
<div class="inp" style="left:668px;top:383px;width:778px;height:201px"></div>
<div class="t" id="l4" style="left:451.00px;top:605px;font-size:20px;color:#333;letter-spacing:-0.095px;">Группа контрагентов:</div>
<div class="inp" style="left:668px;top:598px;width:778px;height:35px"></div>
<div class="sep" style="left:1383px;top:599px;height:33px"></div>
<div class="sep" style="left:1414px;top:599px;height:33px"></div>
<div class="dd" style="left:1394.3px;top:613px;border-left-width:4px;border-right-width:4px;border-top-width:5px;border-top-color:#444"></div>
<svg class="a" style="left:1422px;top:607px" width="17" height="17" viewBox="0 0 17 17"><rect x="7" y="2" width="8" height="8" fill="none" stroke="#3a3a3a" stroke-width="2"/><path d="M4.5 6.5 H2 V15 H10.5 V12.5" fill="none" stroke="#3a3a3a" stroke-width="2"/></svg>
<div class="t" id="l5" style="left:452.50px;top:654px;font-size:20px;color:#333;letter-spacing:-0.036px;">Торговая точка:</div>
<div class="inp" style="left:668px;top:647px;width:778px;height:35px"></div>
<div class="sep" style="left:1383px;top:648px;height:33px"></div>
<div class="sep" style="left:1414px;top:648px;height:33px"></div>
<div class="dd" style="left:1394.3px;top:662px;border-left-width:4px;border-right-width:4px;border-top-width:5px;border-top-color:#444"></div>
<svg class="a" style="left:1422px;top:656px" width="17" height="17" viewBox="0 0 17 17"><rect x="7" y="2" width="8" height="8" fill="none" stroke="#3a3a3a" stroke-width="2"/><path d="M4.5 6.5 H2 V15 H10.5 V12.5" fill="none" stroke="#3a3a3a" stroke-width="2"/></svg>
<div class="a" style="left:452px;top:735px;width:994px;height:248px;border:1px solid #a8a8a8;background:#fff"></div>
<div class="a" style="left:452px;top:697px;width:125px;height:39px;background:#ebebeb;border:1px solid #a8a8a8;border-radius:3px 3px 0 0"></div>
<div class="a" style="left:576px;top:697px;width:204px;height:39px;background:#ebebeb;border:1px solid #a8a8a8;border-radius:3px 3px 0 0"></div>
<div class="a" style="left:779px;top:697px;width:99px;height:39px;background:#fff;border:1px solid #a8a8a8;border-bottom:none;border-radius:3px 3px 0 0"></div>
<div class="t" id="bt1" style="left:467.70px;top:705px;font-size:20px;color:#333;letter-spacing:-0.199px;">Основные</div>
<div class="t" id="bt2" style="left:592.50px;top:705px;font-size:20px;color:#333;letter-spacing:-0.193px;">Адреса, телефоны</div>
<div class="t" id="bt3" style="left:794.20px;top:705px;font-size:20px;color:#333;letter-spacing:-0.120px;">Прочее</div>
<div class="t" id="l6" style="left:467.00px;top:751px;font-size:20px;color:#333;letter-spacing:-0.057px;">Группа доступа:</div>
<div class="a" style="left:620px;top:741px;width:621px;height:41px;border:2px solid #f7c70f;background:#fff"></div>
<div class="a" style="left:628px;top:750px;width:204px;height:23px;background:#5567c4"></div>
<div class="a" style="left:628px;top:750px;width:1px;height:23px;background:#000"></div>
<div class="t" id="v6" style="left:629.30px;top:751px;font-size:20px;color:#fff;letter-spacing:-0.231px;">Астраханская область</div>
<div class="sep" style="left:1175px;top:745px;height:33px;background:#9a9a9a"></div>
<div class="sep" style="left:1206px;top:745px;height:33px;background:#9a9a9a"></div>
<div class="dd" style="left:1186.4px;top:759px;border-left-width:4px;border-right-width:4px;border-top-width:5px;border-top-color:#444"></div>
<svg class="a" style="left:1214px;top:753px" width="17" height="17" viewBox="0 0 17 17"><rect x="7" y="2" width="8" height="8" fill="none" stroke="#3a3a3a" stroke-width="2"/><path d="M4.5 6.5 H2 V15 H10.5 V12.5" fill="none" stroke="#3a3a3a" stroke-width="2"/></svg>
<div class="t" id="wm1" style="left:1385.90px;top:930px;font-size:19px;color:rgba(110,110,110,0.5);letter-spacing:0.518px;">Активация Windows</div>
<div class="t" id="wm2" style="left:1384.90px;top:954px;font-size:15px;color:rgba(110,110,110,0.5);letter-spacing:0.064px;">Чтобы активировать Windows, перейдите в раздел "Параметры".</div>
</body></html>
